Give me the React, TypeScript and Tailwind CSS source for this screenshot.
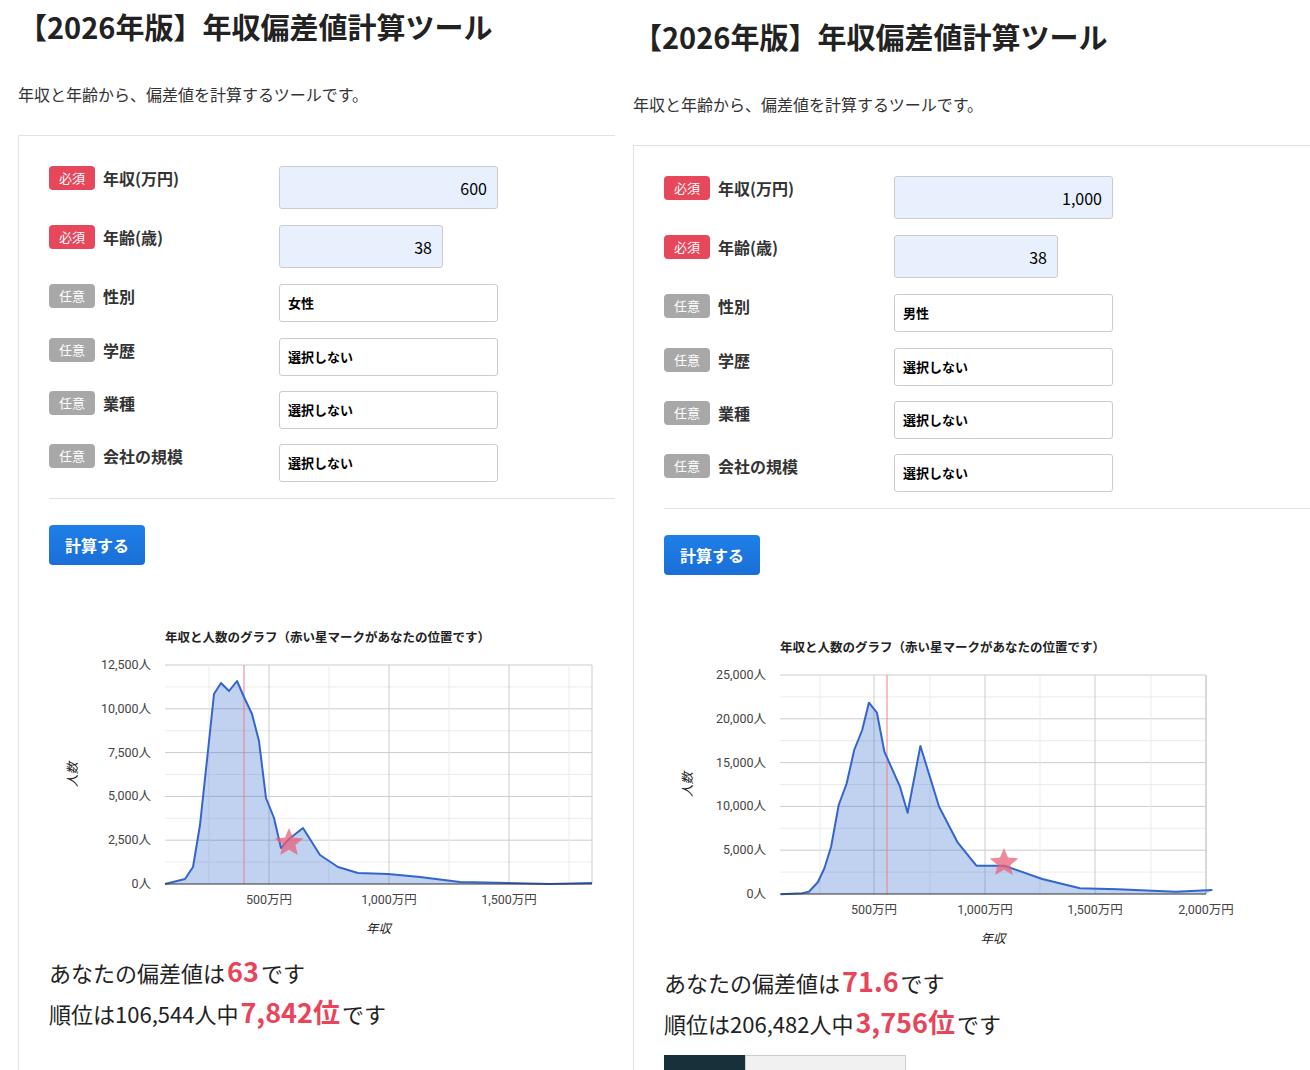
import React from 'react';

type Pt = [number, number];

type Cfg = {
  income: string;
  gender: string;
  ox: number;
  oy: number;
  plot: [number, number, number, number];
  yTicks: string[];
  xTicks: [number, string][];
  minorX: number[];
  pts: Pt[];
  redX: number;
  star: Pt;
  score: string;
  total: string;
  rank: string;
  cardW: string;
  tabs?: boolean;
};

const rightRaw: Pt[] = [
  [362, 793], [410, 790], [425, 785], [445, 757], [460, 715], [475, 650], [492, 525], [510, 460], [527, 360],
  [545, 300], [560, 218], [578, 248], [595, 365], [630, 470], [647, 548], [676, 348], [718, 530], [760, 638],
  [802, 707], [865, 707], [950, 747], [1035, 775], [1120, 778], [1250, 785], [1333, 780],
];

const left: Cfg = {
  income: '600',
  gender: '女性',
  ox: 49,
  oy: 625,
  plot: [165, 665, 592, 884],
  yTicks: ['0人', '2,500人', '5,000人', '7,500人', '10,000人', '12,500人'],
  xTicks: [[269, '500万円'], [389, '1,000万円'], [509, '1,500万円']],
  minorX: [209, 329, 449, 569],
  pts: [[165, 884], [185, 879], [193, 867], [200, 825], [207, 760], [214, 694], [221, 683], [229, 691], [237, 681], [244, 697], [252, 714], [259, 741], [266, 798], [274, 818], [281, 848], [289, 839], [303, 828], [320, 855], [338, 867], [358, 873], [388, 874], [420, 877], [460, 882], [550, 884], [592, 883]],
  redX: 244,
  star: [289, 843],
  score: '63',
  total: '106,544',
  rank: '7,842',
  cardW: 'w-[597px]',
};

const right: Cfg = {
  income: '1,000',
  gender: '男性',
  ox: 664,
  oy: 635,
  plot: [780, 675, 1206, 894],
  yTicks: ['0人', '5,000人', '10,000人', '15,000人', '20,000人', '25,000人'],
  xTicks: [[874, '500万円'], [985, '1,000万円'], [1095, '1,500万円'], [1206, '2,000万円']],
  minorX: [820, 930, 1040, 1151],
  pts: rightRaw.map(([x, y]) => [620 + x / 2.25, 630 + y / 3] as Pt),
  redX: 887,
  star: [1004, 863],
  score: '71.6',
  total: '206,482',
  rank: '3,756',
  cardW: 'w-[690px]',
  tabs: true,
};

function starPath(cx: number, cy: number, r: number) {
  const p: string[] = [];
  for (let i = 0; i < 10; i++) {
    const a = -Math.PI / 2 + (i * Math.PI) / 5;
    const rr = i % 2 ? r * 0.45 : r;
    p.push(`${(cx + rr * Math.cos(a)).toFixed(1)},${(cy + rr * Math.sin(a)).toFixed(1)}`);
  }
  return 'M' + p.join('L') + 'Z';
}

function Chart({ c }: { c: Cfg }) {
  const [x0, y0, x1, y1] = c.plot;
  const step = (y1 - y0) / 5;
  const line = c.pts.map((p, i) => (i ? 'L' : 'M') + p[0].toFixed(1) + ',' + p[1].toFixed(1)).join('');
  const area = line + `L${x1},${y1}L${x0},${y1}Z`;
  const font = { fontFamily: 'Roboto, "Noto Sans CJK JP", sans-serif' };
  return (
    <svg width={600} height={320} viewBox={`${c.ox} ${c.oy} 600 320`} className="block" style={font}>
      <text x={x0} y={c.oy + 17} fontSize={12.5} fontWeight={700} fill="#222" style={{ fontFamily: '"Noto Sans CJK JP", sans-serif' }}>
        年収と人数のグラフ（赤い星マークがあなたの位置です）
      </text>
      {Array.from({ length: 10 }).map((_, i) => (
        <line key={'h' + i} x1={x0} x2={x1} y1={y0 + (i * step) / 2} y2={y0 + (i * step) / 2} stroke={i % 2 ? '#ebebeb' : '#cccccc'} />
      ))}
      {c.minorX.map((x) => (
        <line key={'m' + x} x1={x} x2={x} y1={y0} y2={y1} stroke="#ebebeb" />
      ))}
      {c.xTicks.map(([x]) => (
        <line key={'v' + x} x1={x} x2={x} y1={y0} y2={y1} stroke="#cccccc" />
      ))}
      <line x1={x1} x2={x1} y1={y0} y2={y1} stroke="#cccccc" />
      <path d={area} fill="#3366cc" fillOpacity={0.3} />
      <line x1={c.redX} x2={c.redX} y1={y0} y2={y1} stroke="#f08080" strokeWidth={1} />
      <path d={line} fill="none" stroke="#3366cc" strokeWidth={2} strokeLinejoin="round" />
      <line x1={x0} x2={x1} y1={y1} y2={y1} stroke="#333" />
      <path d={starPath(c.star[0], c.star[1], 15)} fill="#e8607a" fillOpacity={0.75} />
      {c.yTicks.map((t, i) => (
        <text key={t} x={x0 - 14} y={y1 - i * step + 4} textAnchor="end" fontSize={12.5} fill="#444">{t}</text>
      ))}
      {c.xTicks.map(([x, t]) => (
        <text key={t} x={x} y={y1 + 20} textAnchor="middle" fontSize={12.5} fill="#444">{t}</text>
      ))}
      <text x={(x0 + x1) / 2} y={y1 + 49} textAnchor="middle" fontSize={12.5} fontStyle="italic" fill="#222">年収</text>
      <text transform={`translate(${x0 - 88},${(y0 + y1) / 2}) rotate(-90)`} textAnchor="middle" fontSize={12.5} fontStyle="italic" fill="#222">人数</text>
    </svg>
  );
}

function Badge({ req }: { req?: boolean }) {
  return (
    <span className={`w-[46px] h-6 flex items-center justify-center text-[13px] text-white rounded-sm ${req ? 'bg-[#e6475a]' : 'bg-[#a8a8a8]'}`}>
      {req ? '必須' : '任意'}
    </span>
  );
}

function Row({ req, label, children, h }: { req?: boolean; label: string; children: React.ReactNode; h: string }) {
  return (
    <div className={`flex ${h}`}>
      <div className="w-[230px] flex items-start gap-2">
        <Badge req={req} />
        <span className="text-[16px] font-bold text-[#333] leading-6">{label}</span>
      </div>
      {children}
    </div>
  );
}

function Select({ v }: { v: string }) {
  return (
    <div className="w-[219px] h-[38px] border border-[#ccc] rounded-[3px] bg-white flex items-center px-2 text-[13px] font-bold text-black">{v}</div>
  );
}

function Panel({ c }: { c: Cfg }) {
  return (
    <div className="w-[615px] shrink-0">
      <h1 className="text-[29px] font-bold text-[#222] pl-[18px] pt-[4px] leading-[44px]">【2026年版】年収偏差値計算ツール</h1>
      <p className="pl-[18px] mt-[34px] text-[16px] text-[#333] leading-6">年収と年齢から、偏差値を計算するツールです。</p>
      <div className={`${c.cardW} ml-[18px] mt-[29px] border-l border-t border-[#e2e2e2] pl-[30px] pt-[30px] h-[935px]`}>
        <Row req label="年収(万円)" h="h-[59px]">
          <div className="w-[219px] h-[43px] bg-[#e8f0fe] border border-[#ccc] rounded-[3px] flex items-center justify-end px-[10px] text-[16px] text-black">{c.income}</div>
        </Row>
        <Row req label="年齢(歳)" h="h-[59px]">
          <div className="w-[164px] h-[43px] bg-[#e8f0fe] border border-[#ccc] rounded-[3px] flex items-center justify-end px-[10px] text-[16px] text-black">38</div>
        </Row>
        <Row label="性別" h="h-[54px]"><Select v={c.gender} /></Row>
        <Row label="学歴" h="h-[53px]"><Select v="選択しない" /></Row>
        <Row label="業種" h="h-[53px]"><Select v="選択しない" /></Row>
        <Row label="会社の規模" h="h-[54px]"><Select v="選択しない" /></Row>
        <div className="border-t border-[#e2e2e2]" />
        <button className="mt-[26px] w-24 h-10 rounded-sm bg-gradient-to-b from-[#1e7fe8] to-[#1a6fd6] text-white text-[16px] font-bold">計算する</button>
        <div className="mt-[60px]">
          <Chart c={c} />
        </div>
        <p className="mt-[6px] text-[22px] text-[#222] leading-10">
          あなたの偏差値は<span className="text-[27px] font-bold text-[#e8455a] mx-[2px]">{c.score}</span>です
        </p>
        <p className="text-[22px] text-[#222] leading-10">
          順位は{c.total}人中<span className="text-[27px] font-bold text-[#e8455a] mx-[2px]">{c.rank}位</span>です
        </p>
        {c.tabs && (
          <div className="mt-[12px] flex h-5">
            <div className="w-[81px] bg-[#17303a]" />
            <div className="w-[161px] bg-[#f1f1f1] border border-[#ccc]" />
          </div>
        )}
      </div>
    </div>
  );
}

export default function App() {
  return (
    <div className="w-[1310px] h-[1070px] overflow-hidden bg-white flex" style={{ fontFamily: '"Noto Sans CJK JP", "Noto Sans", sans-serif' }}>
      <Panel c={left} />
      <div className="pt-[10px]">
        <Panel c={right} />
      </div>
    </div>
  );
}
